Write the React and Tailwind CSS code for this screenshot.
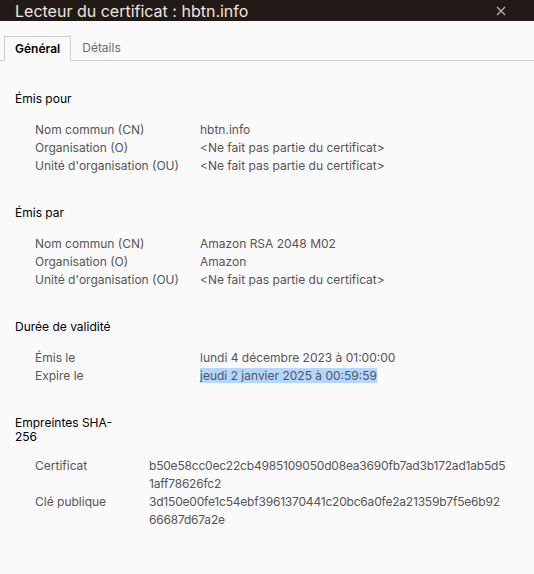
import React from 'react';

const font = { fontFamily: 'Inter, "Liberation Sans", Arial, sans-serif' };

const Row = ({ label, children, wide }) => (
  <div className="flex leading-[18px]">
    <div className={wide ? 'w-[114px] shrink-0' : 'w-[165px] shrink-0'}>{label}</div>
    <div>{children}</div>
  </div>
);

const Section = ({ title, children, className = '', gap = 'mt-[15px]' }) => (
  <div className={className}>
    <div className="w-[100px] text-black leading-[14px]">{title}</div>
    <div className={`pl-5 text-[#555555] ${gap}`}>{children}</div>
  </div>
);

export default function App() {
  const absent = '<Ne fait pas partie du certificat>';
  return (
    <div className="w-[534px] h-[574px] bg-[#fafafa] overflow-hidden text-[12px]" style={font}>
      {/* barre de titre */}
      <div className="h-[21px] bg-[#221a17] flex items-center justify-between pl-[15px] pr-[28px]">
        <span className="text-[16px] text-[#eee6df] leading-none">Lecteur du certificat : hbtn.info</span>
        <svg width="10" height="10" viewBox="0 0 10 10" className="text-[#b9b3ae]">
          <path d="M1 1 L9 9 M9 1 L1 9" stroke="currentColor" strokeWidth="1.3" />
        </svg>
      </div>

      {/* onglets */}
      <div className="mt-[15px] flex items-end border-b border-[#cfcfcf] pl-1 h-[25px]">
        <div className="h-[25px] -mb-px px-[10px] flex items-center border border-b-0 border-[#cfcfcf] bg-[#fafafa] font-semibold text-black">
          Général
        </div>
        <div className="h-[25px] px-[11px] flex items-center text-[#6b6b6b]">Détails</div>
      </div>

      <div className="pl-[15px] pt-[31px]">
        <Section title="Émis pour">
          <Row label="Nom commun (CN)">hbtn.info</Row>
          <Row label="Organisation (O)">{absent}</Row>
          <Row label="Unité d'organisation (OU)">{absent}</Row>
        </Section>

        <Section title="Émis par" className="mt-[31px]">
          <Row label="Nom commun (CN)">Amazon RSA 2048 M02</Row>
          <Row label="Organisation (O)">Amazon</Row>
          <Row label="Unité d'organisation (OU)">{absent}</Row>
        </Section>

        <Section title="Durée de validité" className="mt-[31px]">
          <Row label="Émis le">lundi 4 décembre 2023 à 01:00:00</Row>
          <Row label="Expire le">
            <span className="bg-[#b3d7ff]">jeudi 2 janvier 2025 à 00:59:59</span>
          </Row>
        </Section>

        <Section title="Empreintes SHA-256" className="mt-[31px]" gap="mt-[13px]">
          <Row label="Certificat" wide>
            <div className="tracking-[-0.2px]">b50e58cc0ec22cb4985109050d08ea3690fb7ad3b172ad1ab5d5</div>
            <div className="tracking-[-0.2px]">1aff78626fc2</div>
          </Row>
          <Row label="Clé publique" wide>
            <div className="tracking-[-0.2px]">3d150e00fe1c54ebf3961370441c20bc6a0fe2a21359b7f5e6b92</div>
            <div className="tracking-[-0.2px]">66687d67a2e</div>
          </Row>
        </Section>
      </div>
    </div>
  );
}
